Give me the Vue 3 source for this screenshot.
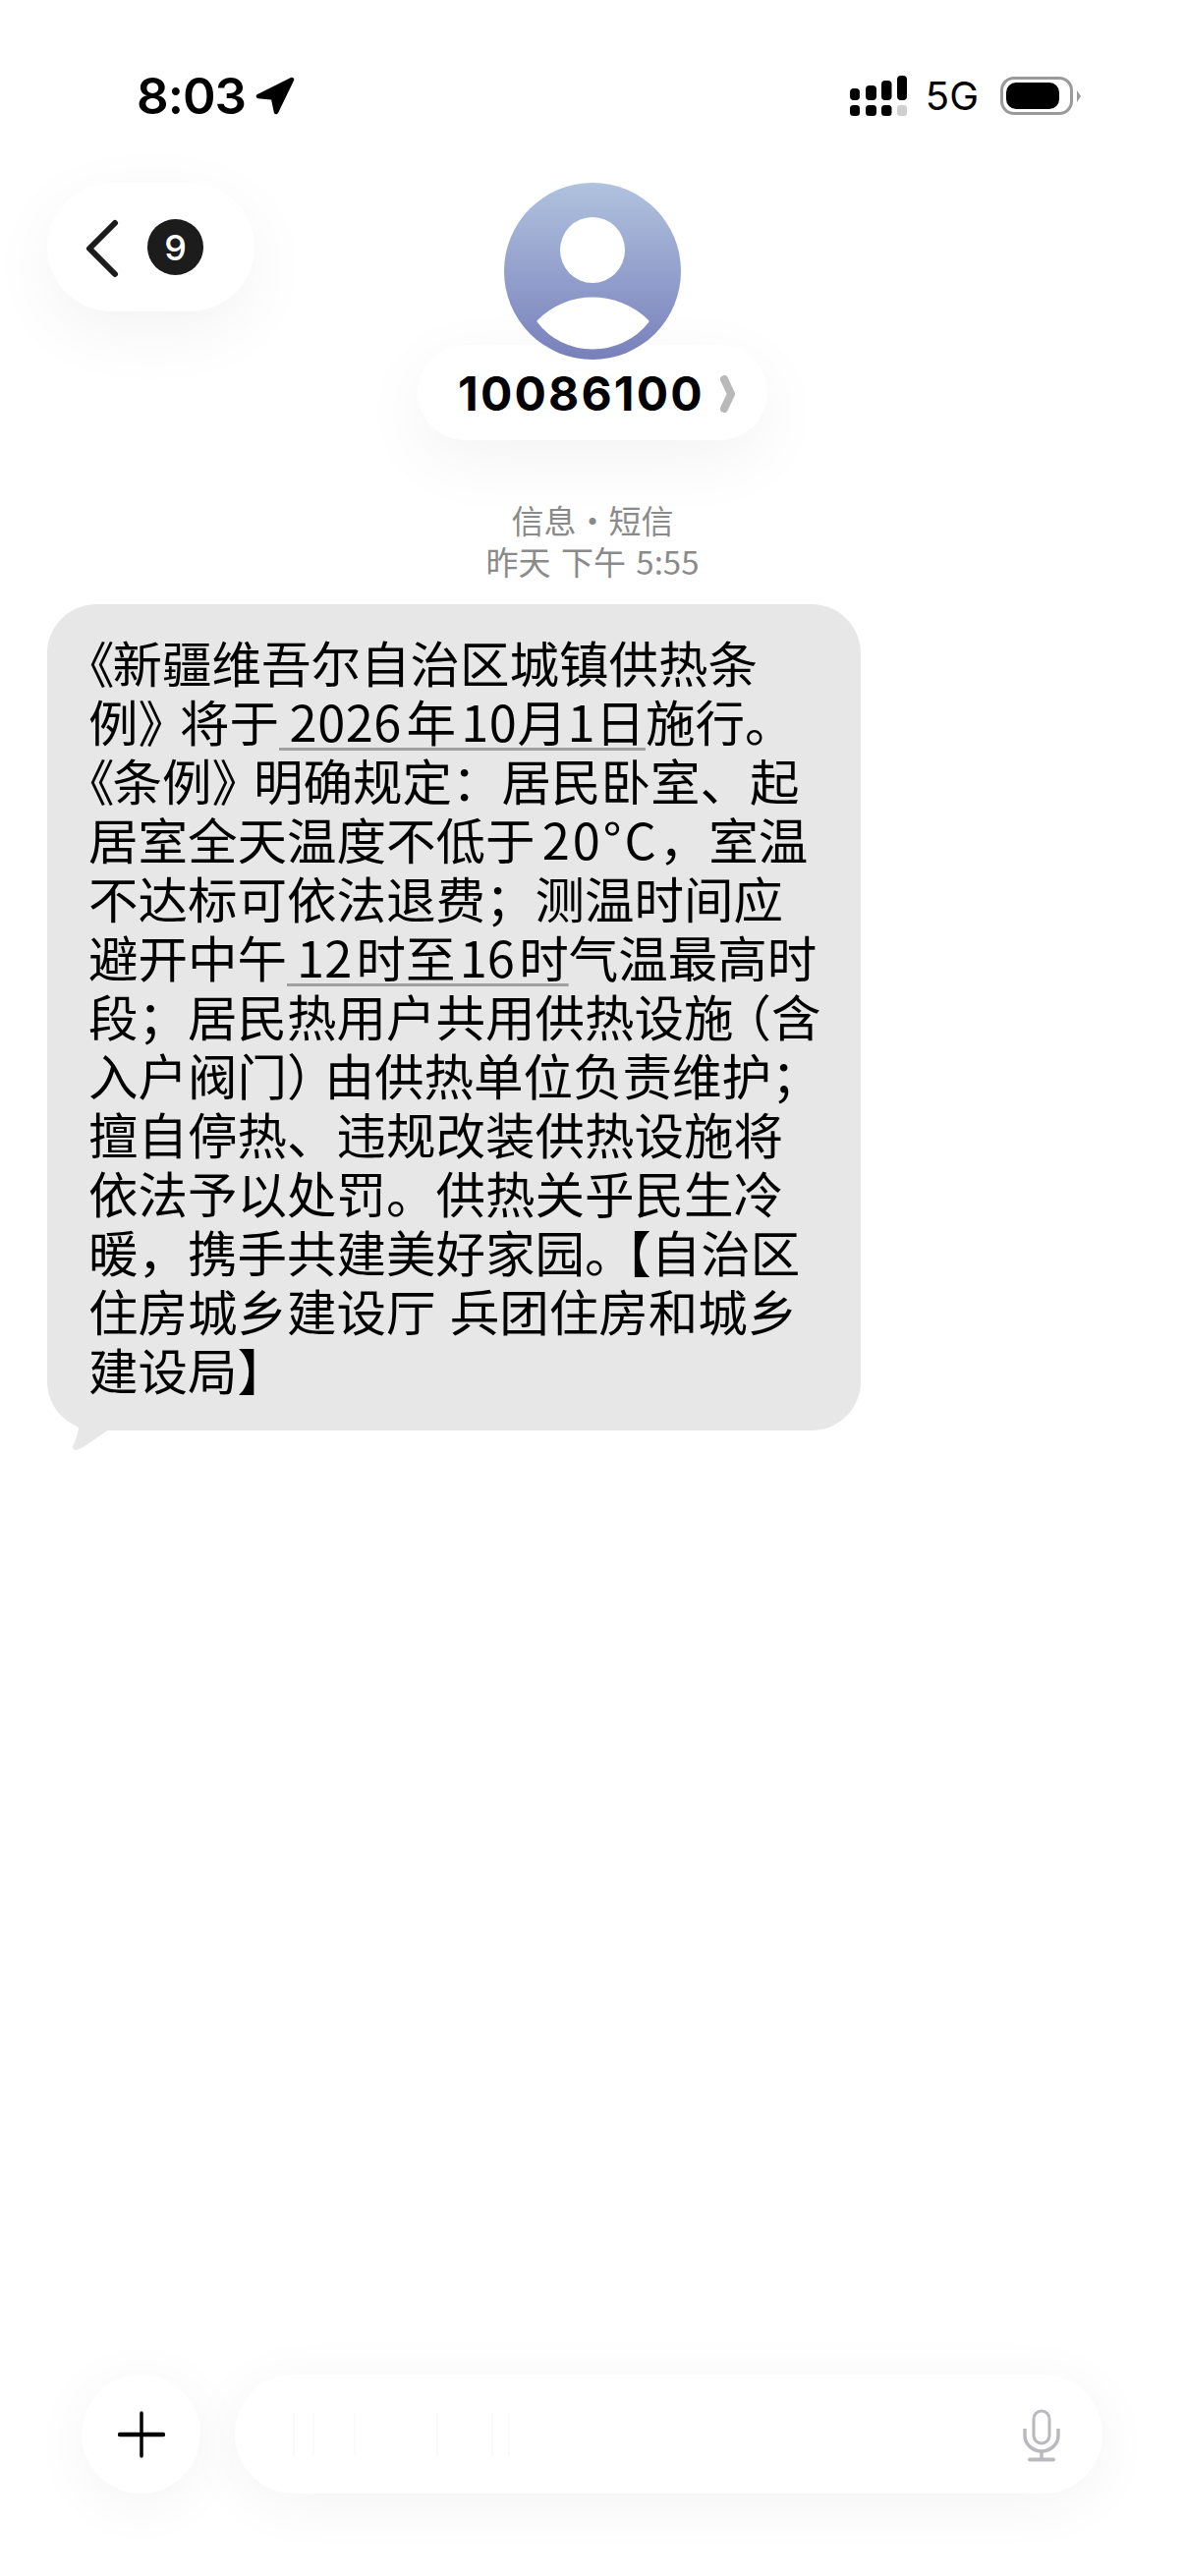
<script setup>
const ghostLines = [0, 20, 62, 146, 202, 219]
</script>

<template>
  <div class="page">
    <div class="status">
      <div class="status-left">
        <span class="time">8:03</span>
        <svg class="arrow" width="40" height="39" viewBox="0 0 40 39">
          <path d="M37 3 L3 20 L18 21.500 L21 36 Z" fill="#000" stroke="#000" stroke-width="4.500" stroke-linejoin="round" />
        </svg>
      </div>
      <div class="status-right">
        <svg width="58" height="41" viewBox="0 0 58 41">
          <rect x="0" y="13" width="10" height="12" rx="4" />
          <rect x="16" y="10" width="11" height="15" rx="4" />
          <rect x="32" y="5" width="10.500" height="20" rx="4" />
          <rect x="48" y="0" width="10" height="25" rx="4" />
          <rect x="0" y="30" width="10" height="11" rx="3.500" />
          <rect x="16" y="30" width="11" height="11" rx="3.500" />
          <rect x="32" y="30" width="10.500" height="11" rx="3.500" />
          <rect x="48" y="30" width="10" height="11" rx="3" fill="#cfcfcf" />
        </svg>
        <span class="net">5G</span>
        <div class="battery">
          <div class="battery-fill"></div>
        </div>
        <svg class="nub" width="4" height="12" viewBox="0 0 4 12"><path d="M0 0 L4 6 L0 12 Z" fill="#9a9a9a" /></svg>
      </div>
    </div>

    <div class="nav">
      <div class="back">
        <svg class="back-icon" width="36" height="60" viewBox="0 0 36 60">
          <path d="M31 4 L5 30 L31 56" fill="none" stroke="#1c1c1c" stroke-width="6" stroke-linecap="round" stroke-linejoin="round" />
        </svg>
        <span class="badge">9</span>
      </div>
      <div class="contact">
        <svg class="avatar" width="180" height="180" viewBox="0 0 180 180">
          <defs>
            <linearGradient id="avatarFill" x1="0" y1="0" x2="0" y2="1">
              <stop offset="0" stop-color="#b0c2de" />
              <stop offset="1" stop-color="#7880bb" />
            </linearGradient>
          </defs>
          <circle cx="90" cy="90" r="90" fill="url(#avatarFill)" />
          <ellipse cx="90" cy="68.500" rx="33" ry="33.500" fill="#fff" />
          <path d="M35 141 C50 126 70 118 90 118 C110 118 131 126 146 141 C133 158 112 168 90 168 C68 168 48 158 35 141 Z" fill="#fff" stroke="#fff" stroke-width="3" stroke-linejoin="round" />
        </svg>
        <div class="name-pill">
          <span class="name">10086100</span>
          <svg width="16" height="38" viewBox="0 0 16 38">
            <path d="M4 4 L11 19 L4 34" fill="none" stroke="#b9b9b9" stroke-width="8" stroke-linecap="round" stroke-linejoin="round" />
          </svg>
        </div>
      </div>
    </div>

    <div class="meta">
      <div>信息・短信</div>
      <div class="meta-time">昨天 下午 5:55</div>
    </div>

    <div class="bubble">
      <div class="line"><span class="halt">《</span>新疆维吾尔自治区城镇供热条</div>
      <div class="line">例<span class="tuck">》</span>将于<span class="link link-wide">&#8201;2026 年 10月1日</span>施行。</div>
      <div class="line"><span class="halt">《</span>条例<span class="tuck">》</span>明确规定：居民卧室、起</div>
      <div class="line">居室全天温度不低于 <span class="num">20°C</span>，室温</div>
      <div class="line">不达标可依法退费；测温时间应</div>
      <div class="line">避开中午<span class="link link-tight">&#8201;12 时至 16 时</span>气温最高时</div>
      <div class="line">段；居民热用户共用供热设施<span class="paren-open">（</span>含</div>
      <div class="line">入户阀门<span class="paren-close">）</span>由供热单位负责维护；</div>
      <div class="line">擅自停热、违规改装供热设施将</div>
      <div class="line">依法予以处罚。供热关乎民生冷</div>
      <div class="line">暖，携手共建美好家园。<span class="bracket">【</span>自治区</div>
      <div class="line line-gap">住房城乡建设厅 兵团住房和城乡</div>
      <div class="line">建设局】</div>
      <svg class="tail" width="50" height="32" viewBox="0 0 50 32">
        <path d="M8 0 C10 8 8 18 3 27 C3 31 6 32 9 30 C19 26 32 14 41 10 L41 0 Z" fill="#e7e7e7" />
      </svg>
    </div>

    <div class="composer">
      <div class="plus">
        <svg width="48" height="48" viewBox="0 0 48 48">
          <path d="M24 2 V46" stroke="#000" stroke-width="3.500" stroke-linecap="round" />
          <path d="M2 24 H46" stroke="#000" stroke-width="4.500" stroke-linecap="round" />
        </svg>
      </div>
      <div class="input">
        <svg class="ghost" width="225" height="44" viewBox="0 0 225 44">
          <path v-for="x in ghostLines" :key="x" :d="`M${x + 1} 0 V44`" stroke="#fafafa" stroke-width="2" />
        </svg>
        <svg class="mic" width="38" height="54" viewBox="0 0 38 54">
          <rect x="11" y="2" width="16" height="33" rx="8" fill="none" stroke="#b9b9be" stroke-width="3" />
          <path d="M2 20 V27 C2 36 10 43 19 43 C28 43 36 36 36 27 V20" fill="none" stroke="#b9b9be" stroke-width="3.500" />
          <path d="M19 43 V51" stroke="#b9b9be" stroke-width="3.500" />
          <path d="M7 51.500 H31" stroke="#b9b9be" stroke-width="4" stroke-linecap="round" />
        </svg>
      </div>
    </div>
  </div>
</template>

<style scoped>
.page {
  width: 1206px;
  height: 2622px;
  background: #fff;
  display: flex;
  flex-direction: column;
  color: #000;
  font-family: "Inter", "Noto Sans CJK SC", sans-serif;
  overflow: hidden;
}
.status {
  box-sizing: border-box;
  height: 118px;
  padding: 77px 106px 0 139px;
  display: flex;
  justify-content: space-between;
  align-items: center;
}
.status-left {
  display: flex;
  align-items: center;
  gap: 10px;
}
.time {
  font-size: 51px;
  line-height: 41px;
  font-weight: 600;
  letter-spacing: -1px;
}
.status-right {
  display: flex;
  align-items: center;
}
.net {
  font-size: 40px;
  line-height: 41px;
  margin-left: 19px;
  font-weight: 400;
}
.battery {
  box-sizing: border-box;
  width: 74px;
  height: 39px;
  margin-left: 22px;
  border: 3.5px solid #9a9a9a;
  border-radius: 14px;
  padding: 3px 11px 3px 3px;
  display: flex;
}
.battery-fill {
  flex: 1;
  background: #000;
  border-radius: 10px;
}
.nub {
  margin-left: 4px;
}
.nav {
  margin-top: 68px;
  padding: 0 48px;
  display: grid;
  grid-template-columns: 1fr auto 1fr;
  align-items: start;
}
.back {
  width: 211px;
  height: 131px;
  box-sizing: border-box;
  padding-left: 38px;
  border-radius: 66px;
  background: #fff;
  display: flex;
  align-items: center;
  gap: 28px;
  box-shadow: 0 20px 70px rgba(0, 0, 0, 0.05);
}
.back-icon {
  margin-top: 2px;
}
.badge {
  width: 57px;
  height: 57px;
  border-radius: 50%;
  background: #1c1c1c;
  color: #fff;
  font-size: 36px;
  font-weight: 500;
  display: flex;
  align-items: center;
  justify-content: center;
}
.contact {
  display: flex;
  flex-direction: column;
  align-items: center;
  grid-column: 2;
}
.avatar {
  position: relative;
  z-index: 1;
  display: block;
}
.name-pill {
  box-sizing: border-box;
  margin-top: -15px;
  height: 97px;
  width: 356px;
  padding: 3px 0 0 41px;
  border-radius: 49px;
  background: #fff;
  display: flex;
  align-items: center;
  gap: 17px;
  box-shadow: 0 20px 70px rgba(0, 0, 0, 0.05);
}
.name {
  font-size: 48px;
  line-height: 48px;
  font-weight: 700;
  letter-spacing: 2.2px;
  width: 250px;
  white-space: nowrap;
}
.meta {
  margin-top: 60px;
  text-align: center;
  font-family: "Noto Sans CJK SC", sans-serif;
  font-size: 33px;
  line-height: 42px;
  color: #8a8a8a;
}
.meta-time {
  word-spacing: 3px;
}
.bubble {
  position: relative;
  box-sizing: border-box;
  width: 828px;
  height: 841px;
  margin: 23px 0 0 48px;
  padding: 28px 0 0 42px;
  background: #e7e7e7;
  border-radius: 50px;
  font-family: "Noto Sans CJK SC", sans-serif;
  font-size: 50.5px;
  line-height: 60px;
  color: #000;
}
.line {
  height: 60px;
  white-space: nowrap;
}
.line-gap {
  word-spacing: 3px;
}
.halt {
  margin-left: -24px;
  margin-right: -2px;
}
.tuck {
  margin-right: -8px;
}
.paren-open {
  margin-left: -12px;
}
.paren-close {
  margin-right: -12px;
}
.bracket {
  margin-left: -8px;
}
.num {
  letter-spacing: 3px;
  margin-left: -4px;
}
.link {
  text-decoration: underline;
  text-decoration-color: #a0a0a0;
  text-decoration-thickness: 3px;
  text-decoration-skip-ink: none;
  text-underline-offset: 6px;
}
.link-wide {
  letter-spacing: 0.5px;
  word-spacing: -7px;
}
.link-tight {
  letter-spacing: 0;
  word-spacing: -7px;
}
.tail {
  position: absolute;
  left: 23px;
  bottom: -21px;
}
.composer {
  margin-top: auto;
  padding: 0 84px 84px 83px;
  display: flex;
  gap: 35px;
}
.plus {
  flex: none;
  width: 121px;
  height: 121px;
  border-radius: 50%;
  background: #fff;
  display: flex;
  align-items: center;
  justify-content: center;
  box-shadow: 0 10px 60px rgba(0, 0, 0, 0.05);
}
.input {
  flex: 1;
  height: 121px;
  border-radius: 60px;
  background: #fff;
  box-sizing: border-box;
  padding: 0 43px 0 59px;
  display: flex;
  align-items: center;
  justify-content: space-between;
  box-shadow: 0 10px 60px rgba(0, 0, 0, 0.05);
}
.mic {
  margin-top: 2px;
}
</style>

<style>
html, body {
  margin: 0;
  background: #fff;
}
</style>
